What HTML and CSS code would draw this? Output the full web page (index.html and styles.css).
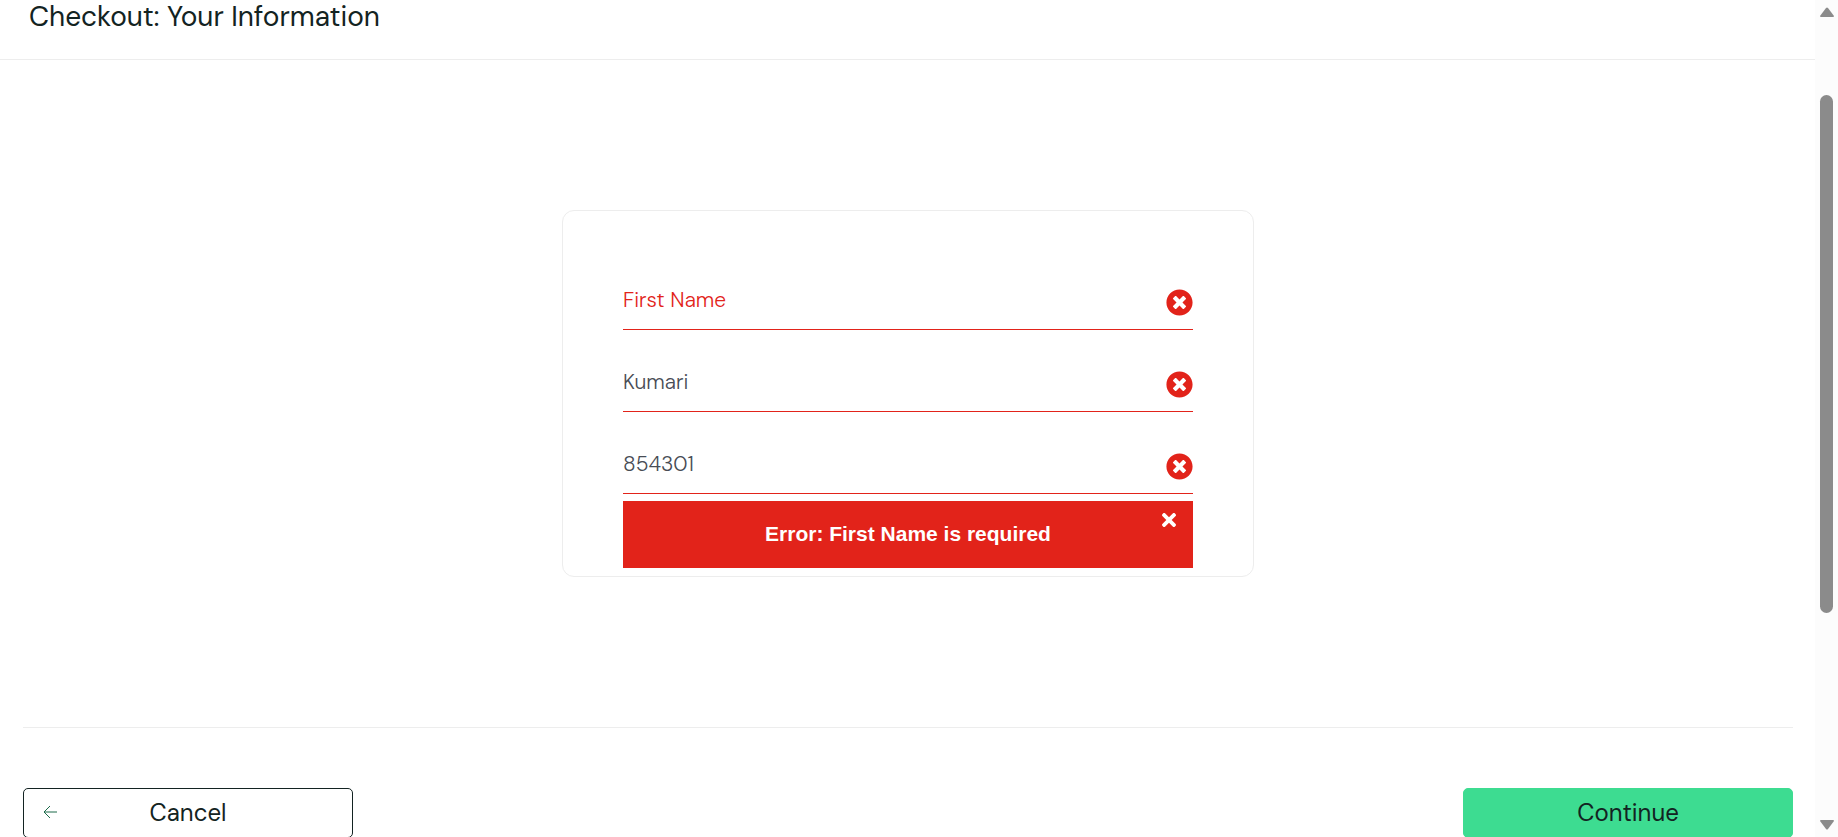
FILE: index.html
```html
<!DOCTYPE html>
<html lang="en">
<head>
<meta charset="utf-8">
<title>Checkout: Your Information</title>
<link rel="stylesheet" href="styles.css">
</head>
<body>
<svg class="sprite" aria-hidden="true">
  <symbol id="times" viewBox="0 0 352 352"><path fill="currentColor" d="M243 176 343 76c12-12 12-32 0-45L321 9c-12-12-32-12-45 0L176 109 76 9C64-3 44-3 31 9L9 31c-12 12-12 32 0 45l100 100L9 276c-12 12-12 32 0 45l22 22c12 12 32 12 45 0l100-100 100 100c12 12 32 12 45 0l22-22c12-12 12-32 0-45z"/></symbol>
  <symbol id="times-circle" viewBox="0 0 512 512"><path fill="currentColor" d="M256 8C119 8 8 119 8 256s111 248 248 248 248-111 248-248S393 8 256 8zm121.600 313.100c4.700 4.700 4.700 12.300 0 17L338 377.600c-4.700 4.700-12.300 4.700-17 0L256 312l-65.100 65.600c-4.700 4.700-12.300 4.700-17 0L134.400 338c-4.700-4.700-4.700-12.300 0-17l65.600-65-65.600-65.100c-4.700-4.700-4.700-12.300 0-17l39.600-39.600c4.700-4.700 12.300-4.700 17 0l65 65.700 65.100-65.600c4.700-4.700 12.300-4.700 17 0l39.600 39.600c4.700 4.700 4.700 12.300 0 17L312 256l65.600 65.100z"/></symbol>
</svg>
<div class="page">
  <header class="header">
    <h1 class="title">Checkout: Your Information</h1>
  </header>
  <form class="checkout">
    <div class="card">
      <div class="field">
        <input class="input" type="text" placeholder="First Name" aria-label="First Name">
        <svg class="field-icon"><use href="#times-circle"/></svg>
      </div>
      <div class="field">
        <input class="input" type="text" value="Kumari" aria-label="Last Name">
        <svg class="field-icon"><use href="#times-circle"/></svg>
      </div>
      <div class="field">
        <input class="input" type="text" value="854301" aria-label="Postal Code">
        <svg class="field-icon"><use href="#times-circle"/></svg>
      </div>
      <div class="error">
        <h3 class="error-text">Error: First Name is required</h3>
        <button class="error-close" type="button" aria-label="Dismiss error"><svg class="error-icon"><use href="#times"/></svg></button>
      </div>
    </div>
    <div class="actions">
      <button class="button cancel" type="button">
        <svg class="back" viewBox="0 0 14 14" fill="none" stroke="currentColor"><path d="M1 7H14M7 1 1 7l6 6"/></svg>
        Cancel
      </button>
      <button class="button continue" type="submit">Continue</button>
    </div>
  </form>
</div>
<div class="scrollbar" aria-hidden="true">
  <svg class="arrow" viewBox="0 0 14 10"><path d="M6 1q1-1 2 0l6 8q0 1-1 1H1q-1 0-1-1z"/></svg>
  <div class="track"><div class="thumb"></div></div>
  <svg class="arrow" viewBox="0 0 14 10"><path d="M6 9q1 1 2 0l6-8q0-1-1-1H1q-1 0-1 1z"/></svg>
</div>
</body>
</html>
```
FILE: styles.css
```css
* {
  box-sizing: border-box;
}

body {
  display: flex;
  height: 100vh;
  margin: 0;
  overflow: hidden;
  background: #fff;
  color: #132322;
  font-family: "DM Sans", Inter, sans-serif;
}

.sprite {
  position: absolute;
  width: 0;
  height: 0;
}

.page {
  flex: 1;
  min-width: 0;
}

.header {
  padding: 0 29px 25px;
  border-bottom: 1px solid #ededed;
}

.title {
  margin: 0;
  font-size: 28px;
  font-weight: 400;
  line-height: 34px;
}

.checkout {
  padding: 150px 22px 0 23px;
}

.card {
  max-width: 692px;
  margin: 0 auto 150px;
  padding: 58px 60px 8px;
  border: 1px solid #ededed;
  border-radius: 12px;
}

.field {
  display: flex;
  align-items: center;
  height: 61px;
  margin-bottom: 21px;
  border-bottom: 1px solid #e2231a;
}

.field:nth-child(3) {
  margin-bottom: 7px;
}

.input {
  flex: 1;
  min-width: 0;
  height: 60px;
  padding: 2px 0 0;
  border: 0;
  outline: 0;
  background: none;
  color: #484c55;
  font-family: inherit;
  font-size: 21px;
  font-weight: 300;
  line-height: 30px;
}

.input::placeholder {
  color: #e2231a;
  opacity: 1;
}

.field-icon {
  width: 27px;
  height: 27px;
  margin-top: 6px;
  color: #e2231a;
}

.error {
  display: grid;
  grid-template-columns: 48px 1fr 48px;
  height: 67px;
  background: #e2231a;
  color: #fff;
}

.error-text {
  grid-column: 2;
  align-self: center;
  margin: 0;
  padding-bottom: 2px;
  font: 700 21px/24px "Liberation Sans", sans-serif;
  text-align: center;
}

.error-close {
  display: flex;
  justify-content: center;
  height: 32px;
  padding: 12px 0 0;
  border: 0;
  background: none;
  color: #fff;
}

.error-icon {
  width: 14px;
  height: 14px;
}

.actions {
  display: flex;
  justify-content: space-between;
  padding-top: 60px;
  border-top: 1px solid #ededed;
}

.button {
  width: 330px;
  height: 50px;
  border: 1px solid #132322;
  border-radius: 5px;
  background: #fff;
  color: #132322;
  font-family: inherit;
  font-size: 24px;
  font-weight: 400;
  line-height: 30px;
}

.cancel {
  display: grid;
  grid-template-columns: 14px 1fr 14px;
  align-items: center;
  padding: 0 19px;
}

.continue {
  border-color: #3ddc91;
  background: #3ddc91;
}

.back {
  width: 14px;
  height: 14px;
  margin-bottom: 2px;
  color: #1c6b4a;
}

.scrollbar {
  display: flex;
  flex-direction: column;
  align-items: center;
  width: 23px;
  padding: 7px 0;
  background: #fcfcfc;
  fill: #8b8b8b;
}

.arrow {
  width: 14px;
  height: 10px;
}

.track {
  display: grid;
  grid-template-rows: 5fr 2fr;
  flex: 1;
  padding-top: 78px;
}

.thumb {
  width: 13px;
  border-radius: 7px;
  background: #8b8b8b;
}
```
